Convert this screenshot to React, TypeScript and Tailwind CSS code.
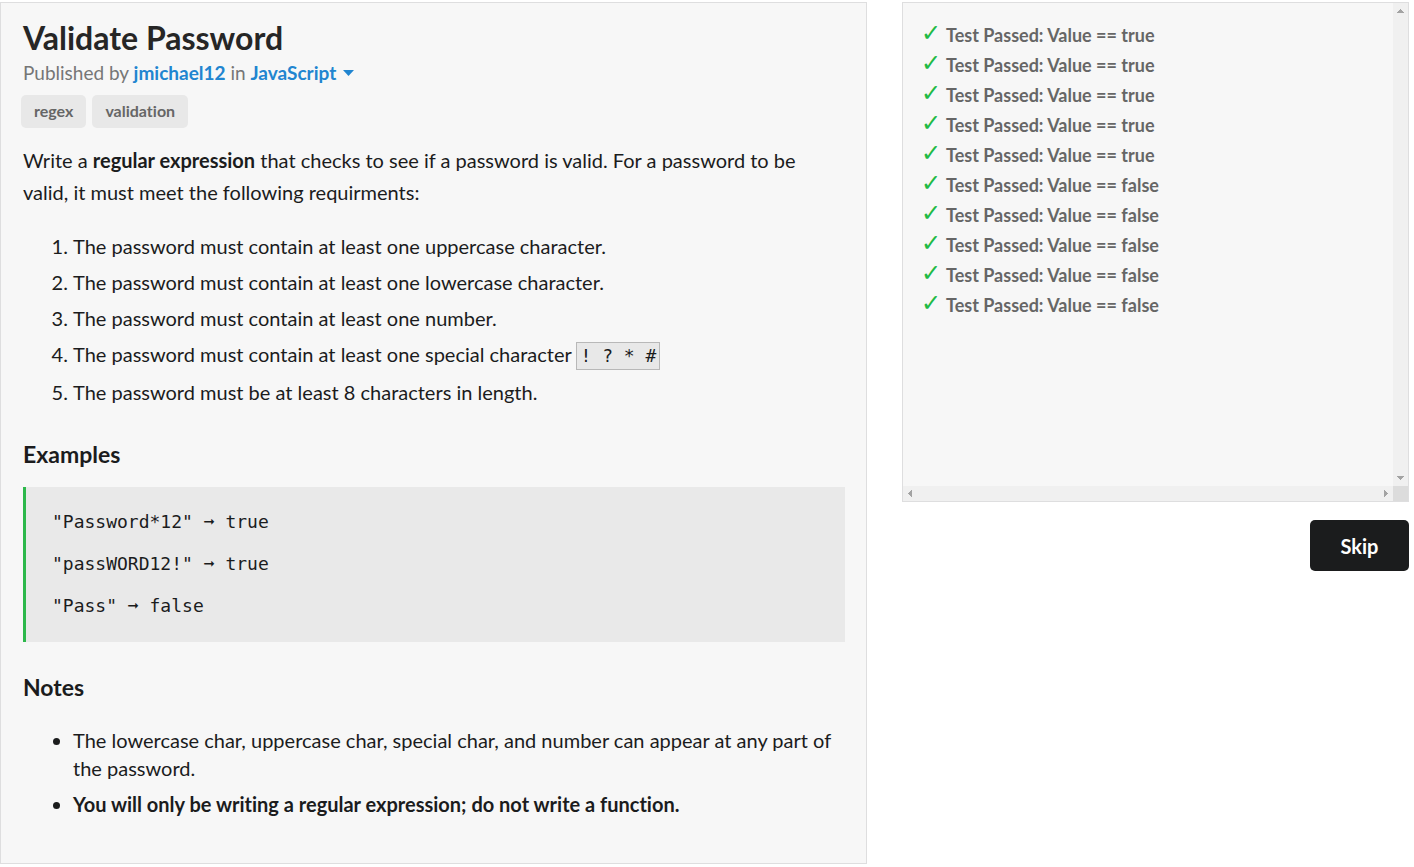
const requirements = [
  "The password must contain at least one uppercase character.",
  "The password must contain at least one lowercase character.",
  "The password must contain at least one number.",
];

const examples = ['"Password*12" ➞ true', '"passWORD12!" ➞ true', '"Pass" ➞ false'];

const results = [true, true, true, true, true, false, false, false, false, false];

function ScrollArrow({ points, label }: { points: string; label: string }) {
  return (
    <svg className="size-[15px] shrink-0" viewBox="0 0 15 15" aria-label={label} shapeRendering="crispEdges">
      <polygon points={points} fill="#a3a3a3" />
    </svg>
  );
}

function Challenge() {
  return (
    <main className="border border-[#dededf] bg-[#f7f7f7] pt-[14px] pr-[21px] pb-[41px] pl-[22px] text-[20px] text-[#1b1c1d]">
      <h1 className="text-[32px] leading-[42px] font-bold text-[#262626]">Validate Password</h1>
      <p className="text-[19px] leading-[28px] text-[#767676]">
        Published by{" "}
        <a href="#author" className="font-bold text-[#2185d0]">jmichael12</a> in{" "}
        <button type="button" className="inline-flex items-center gap-[7px] font-bold text-[#2185d0]">
          JavaScript
          <svg className="h-[6px] w-[11px]" viewBox="0 0 11 6" aria-hidden="true">
            <path d="M0 0h11L5.5 6z" fill="currentColor" />
          </svg>
        </button>
      </p>
      <div className="-mx-[2px] mt-2 flex gap-[6px] text-[16px] leading-[31px] font-bold text-[#666]">
        <a href="#regex" className="rounded-[5px] bg-[#e8e8e8] px-[13px] pb-[2px]">regex</a>
        <a href="#validation" className="rounded-[5px] bg-[#e8e8e8] px-[13px] pb-[2px]">validation</a>
      </div>
      <p className="mt-[16px] leading-[32px]">
        Write a <strong>regular expression</strong> that checks to see if a password is valid. For a
        password to be valid, it must meet the following requirments:
      </p>
      <ol className="mt-5 list-decimal pl-[50px] leading-[28px]">
        {requirements.map((text) => (
          <li key={text} className="py-1">{text}</li>
        ))}
        <li className="py-1">
          The password must contain at least one special character{" "}
          <code className="inline-block border border-[#b8b8b8] bg-[#e8e8e8] px-[3px] font-['DejaVu_Sans_Mono',monospace] text-[18px] leading-[26px]">
            ! ? * #
          </code>
        </li>
        <li className="py-1">The password must be at least 8 characters in length.</li>
      </ol>
      <h2 className="mt-[29px] text-[23px] leading-[30px] font-bold">Examples</h2>
      <pre className="mt-[18px] border-l-[3px] border-[#2db84b] bg-[#e9e9e9] px-[26px] pt-[14px] pb-[15px] font-['DejaVu_Sans_Mono',monospace] text-[18px] leading-[42px]">
        {examples.join("\n")}
      </pre>
      <h2 className="mt-[30px] text-[23px] leading-[30px] font-bold">Notes</h2>
      <ul className="mt-[20px] list-disc pl-[50px] leading-[28px]">
        <li className="py-1">
          The lowercase char, uppercase char, special char, and number can appear at any part of the
          password.
        </li>
        <li className="py-1 font-bold">
          You will only be writing a regular expression; do not write a function.
        </li>
      </ul>
    </main>
  );
}

function Results() {
  return (
    <section aria-label="Test results" className="grid h-[500px] grid-cols-[1fr_15px] grid-rows-[1fr_15px] border border-[#dededf] bg-[#f7f7f7]">
      <ul className="px-[18px] pt-[17px] text-[18px] leading-[30px] font-bold text-[#666]">
        {results.map((value, i) => (
          <li key={i} className="flex gap-[5px]">
            <span className="w-[20px] font-['DejaVu_Sans',sans-serif] text-[24px] leading-[26px] font-normal text-[#21ba45]">✓</span>
            Test Passed: Value == {String(value)}
          </li>
        ))}
      </ul>
      <div className="flex flex-col justify-between bg-[#f0f0f0]">
        <ScrollArrow label="Scroll up" points="4,10 11,10 7.5,6" />
        <ScrollArrow label="Scroll down" points="4,5 11,5 7.5,9" />
      </div>
      <div className="flex justify-between bg-[#f0f0f0]">
        <ScrollArrow label="Scroll left" points="9,4 9,11 5,7.5" />
        <ScrollArrow label="Scroll right" points="6,4 6,11 10,7.5" />
      </div>
      <div className="bg-[#dcdcdc]" />
    </section>
  );
}

export default function App() {
  return (
    <div className="grid min-h-screen grid-cols-[867fr_507fr] items-start gap-[35px] bg-white pt-[2px] pr-[5px] pb-[3px] font-[Lato,sans-serif] [font-variant-ligatures:none]">
      <Challenge />
      <div className="flex flex-col gap-[18px]">
        <Results />
        <button type="button" className="min-w-[99px] self-end rounded-[5px] bg-[#1b1c1d] px-[30px] pt-px text-[20px] leading-[50px] font-bold text-white">
          Skip
        </button>
      </div>
    </div>
  );
}
